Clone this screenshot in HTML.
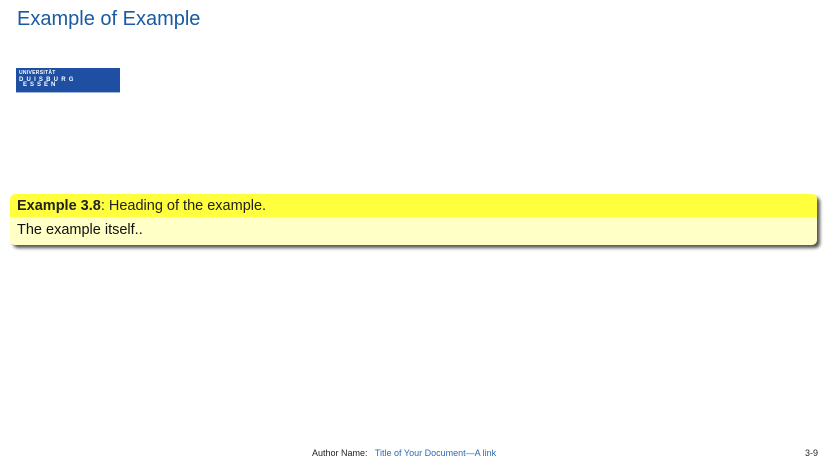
<!DOCTYPE html>
<html><head><meta charset="utf-8"><style>
body{margin:0;width:828px;height:464px;background:#fff;position:relative;font-family:"Liberation Sans",sans-serif;overflow:hidden}
.t{position:absolute;left:17px;top:8px;font-size:20px;color:#1a5aa3}
.logo{position:absolute;left:16px;top:68px;width:104px;height:24px;background:#1f4fa3;border-bottom:1px solid #9fb7dd;color:#fff;font-weight:bold}
.logo div{position:absolute;white-space:nowrap}
.box{position:absolute;left:10px;top:194px;width:807px;height:51px;border-radius:5px;box-shadow:3px 3px 3px #555;overflow:hidden;background:#ffffc6}
.h{height:23px;background:#ffff3d;font-size:14.5px;line-height:25px;padding-left:7px;color:#222}
.b{font-size:14.5px;line-height:27px;padding-left:7px;color:#111}
.f{position:absolute;top:448px;font-size:9px;color:#222}
</style></head><body>
<div class="t">Example of Example</div>
<div class="logo">
<div style="left:3px;top:2px;font-size:5px;letter-spacing:0.3px">UNIVERSITÄT</div>
<div style="left:3px;top:9px;font-size:6px;letter-spacing:3.2px">DUISBURG</div>
<div style="left:7px;top:14px;font-size:6px;letter-spacing:3px">ESSEN</div>
</div>
<div class="box"><div class="h"><b>Example 3.8</b>: Heading of the example.</div><div class="b">The example itself..</div></div>
<div class="f" style="left:312px">Author Name:&nbsp;&nbsp; <span style="color:#2a6ab8">Title of Your Document—A link</span></div>
<div class="f" style="left:805px">3-9</div>
</body></html>
